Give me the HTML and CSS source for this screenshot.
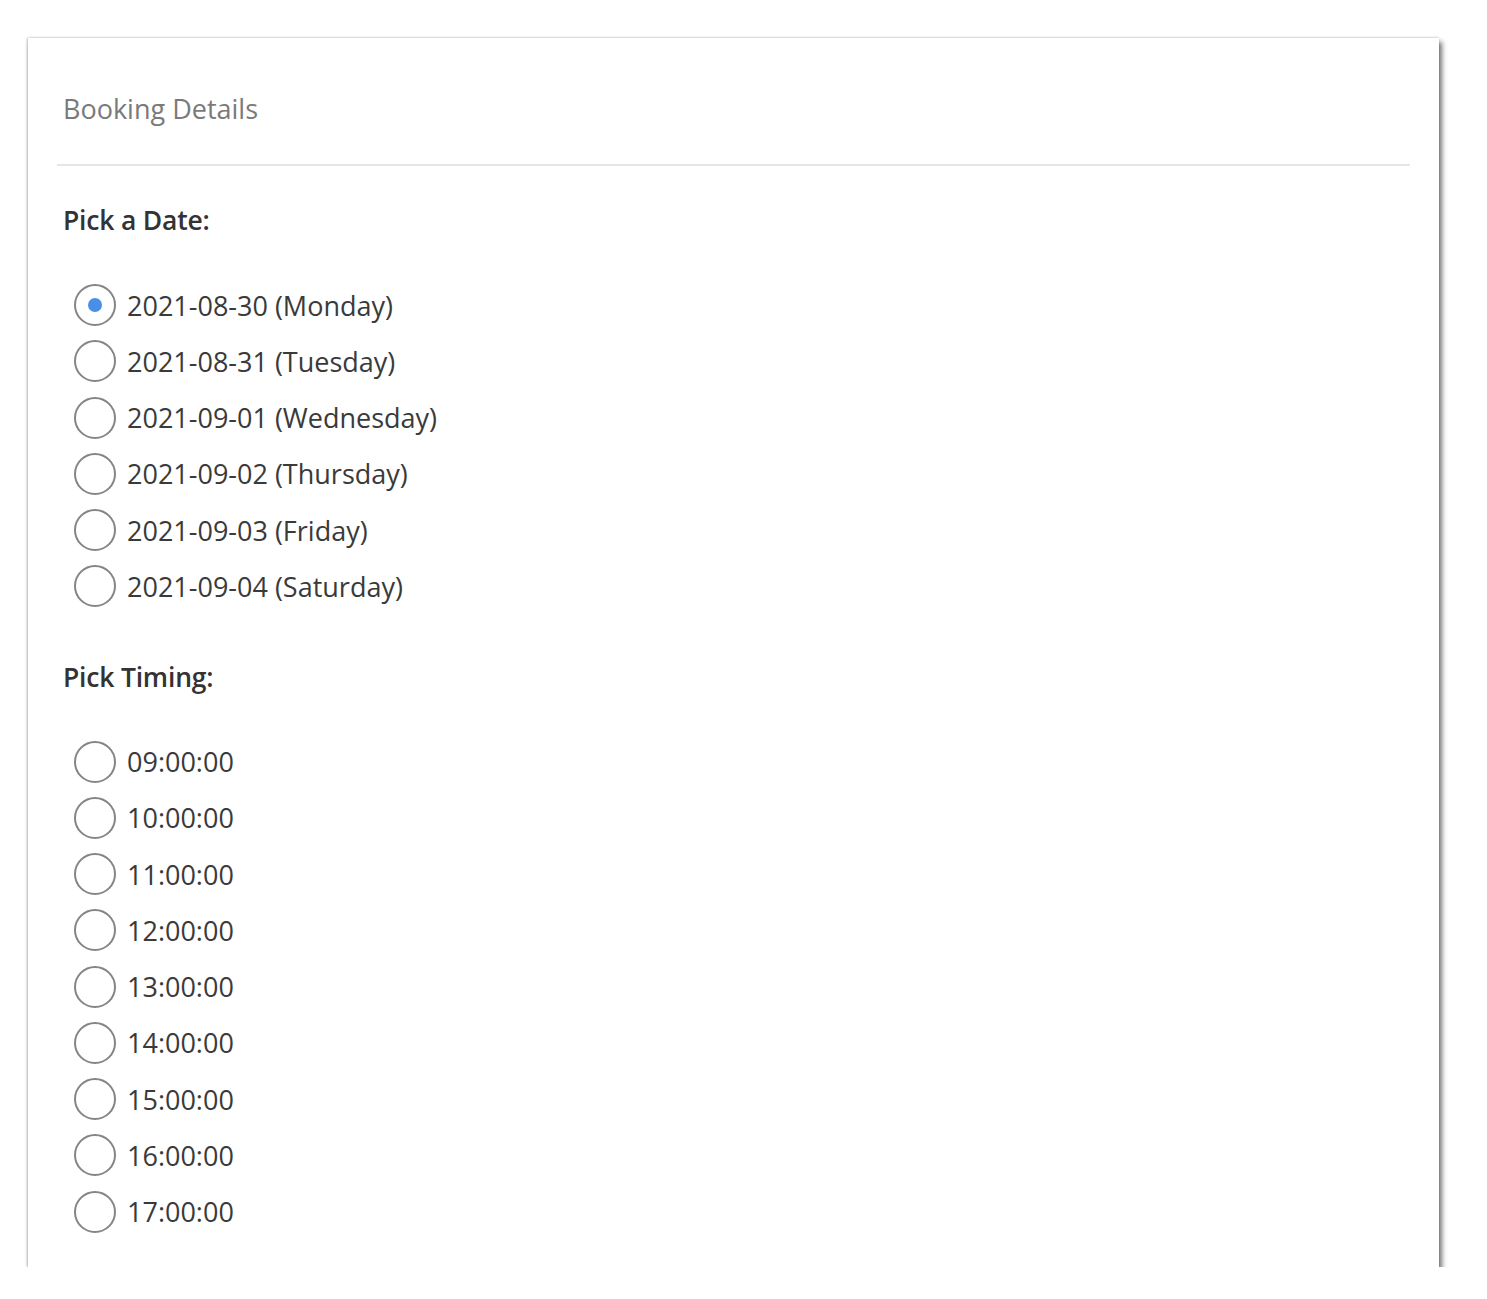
FILE: index.html
```html
<!DOCTYPE html>
<html>
<head>
<meta charset="utf-8">
<link rel="stylesheet" href="styles.css">
</head>
<body>
<div class="card">
  <div class="card-header">Booking Details</div>
  <div class="card-body">
    <div class="group-label">Pick a Date:</div>
    <div class="options">
      <label class="option"><input type="radio" name="date" checked><span>2021-08-30 (Monday)</span></label>
      <label class="option"><input type="radio" name="date"><span>2021-08-31 (Tuesday)</span></label>
      <label class="option"><input type="radio" name="date"><span>2021-09-01 (Wednesday)</span></label>
      <label class="option"><input type="radio" name="date"><span>2021-09-02 (Thursday)</span></label>
      <label class="option"><input type="radio" name="date"><span>2021-09-03 (Friday)</span></label>
      <label class="option"><input type="radio" name="date"><span>2021-09-04 (Saturday)</span></label>
    </div>
    <div class="group-label timing">Pick Timing:</div>
    <div class="options">
      <label class="option"><input type="radio" name="time"><span>09:00:00</span></label>
      <label class="option"><input type="radio" name="time"><span>10:00:00</span></label>
      <label class="option"><input type="radio" name="time"><span>11:00:00</span></label>
      <label class="option"><input type="radio" name="time"><span>12:00:00</span></label>
      <label class="option"><input type="radio" name="time"><span>13:00:00</span></label>
      <label class="option"><input type="radio" name="time"><span>14:00:00</span></label>
      <label class="option"><input type="radio" name="time"><span>15:00:00</span></label>
      <label class="option"><input type="radio" name="time"><span>16:00:00</span></label>
      <label class="option"><input type="radio" name="time"><span>17:00:00</span></label>
    </div>
  </div>
</div>
</body>
</html>
```
FILE: styles.css
```css
html, body {
  margin: 0;
  padding: 0;
  background: #ffffff;
}
body {
  font-family: "Open Sans", "Noto Sans", "Liberation Sans", sans-serif;
  color: #333333;
  padding: 38px 0 0 28px;
}
.card {
  width: 1411px;
  height: 1229px;
  box-sizing: border-box;
  background: #ffffff;
  padding: 0 29px;
  box-shadow: -1px 0 2px rgba(0,0,0,0.22), 0 -1px 2px rgba(0,0,0,0.06), 3px 4px 5px rgba(0,0,0,0.55);
}
.card-header {
  height: 128px;
  box-sizing: border-box;
  padding: 14px 0 0 6px;
  display: flex;
  align-items: center;
  font-size: 27px;
  color: #7a7a7a;
  border-bottom: 2px solid #e6e6e6;
}
.card-body {
  padding: 34px 0 0 6px;
}
.group-label {
  font-size: 26.5px;
  font-weight: 600;
  letter-spacing: -0.2px;
  color: #333;
  height: 40px;
  line-height: 40px;
}
.group-label.timing {
  margin-top: 42px;
}
.options {
  margin-top: 37px;
  display: flex;
  flex-direction: column;
}
.option {
  display: flex;
  align-items: center;
  height: 56.25px;
  font-size: 27px;
  color: #3a3a3a;
}
.option input {
  appearance: none;
  -webkit-appearance: none;
  margin: 0 11px 0 11px;
  width: 42px;
  height: 42px;
  border: 2px solid #858585;
  border-radius: 50%;
  box-sizing: border-box;
  display: grid;
  place-items: center;
  background: #fff;
}
.option input:checked::after {
  content: "";
  width: 14px;
  height: 14px;
  border-radius: 50%;
  background: #4a8fe7;
}
```
